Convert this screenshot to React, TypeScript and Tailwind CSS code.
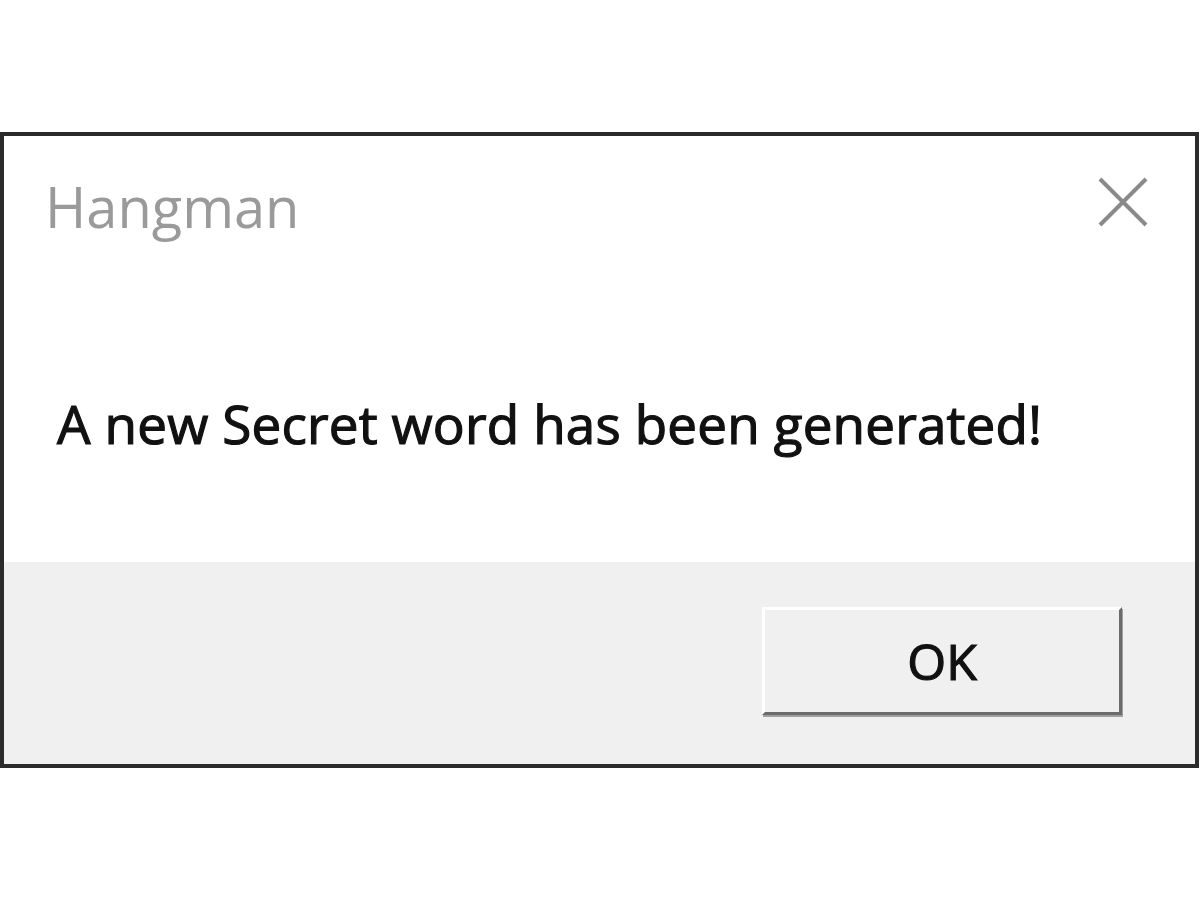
export default function App() {
  return (
    <div className="h-[900px] w-[1200px] bg-white pt-[132px]" style={{ fontFamily: '"Open Sans", "Noto Sans", sans-serif' }}>
      <div className="flex h-[636px] w-[1199px] flex-col border-4 border-[#2b2b2b] shadow-[inset_1px_1px_0_#9a9a9a,inset_-1px_-1px_0_#9a9a9a]">
        <div className="relative flex h-[426px] flex-col bg-white">
          <div className="flex h-[130px] items-start justify-between pl-[41px] pr-[46px] pt-[30px]">
            <span className="text-[56px] leading-[80px] text-[#9a9a9a]">Hangman</span>
            <svg className="mt-[10px]" width="52" height="52" viewBox="0 0 52 52">
              <path d="M3 3 L49 49 M49 3 L3 49" stroke="#8a8a8a" strokeWidth="4" />
            </svg>
          </div>
          <div className="pl-[53px] pt-[128px]">
            <p className="text-[53px] leading-[60px] tracking-[0.15px] text-[#111] [-webkit-text-stroke:1.2px_#111]">A new Secret word has been generated!</p>
          </div>
        </div>
        <div className="flex flex-1 items-start justify-end bg-[#f0f0f0] pr-[73px] pt-[45px]">
          <button className="flex h-[108px] w-[360px] items-center justify-center border-[3px] border-t-white border-l-white border-b-[#6b6b6b] border-r-[#6b6b6b] bg-[#f0f0f0] text-[50px] text-[#111] shadow-[1px_2px_0_#a0a0a0] [-webkit-text-stroke:1.2px_#111]">
            OK
          </button>
        </div>
      </div>
    </div>
  );
}
